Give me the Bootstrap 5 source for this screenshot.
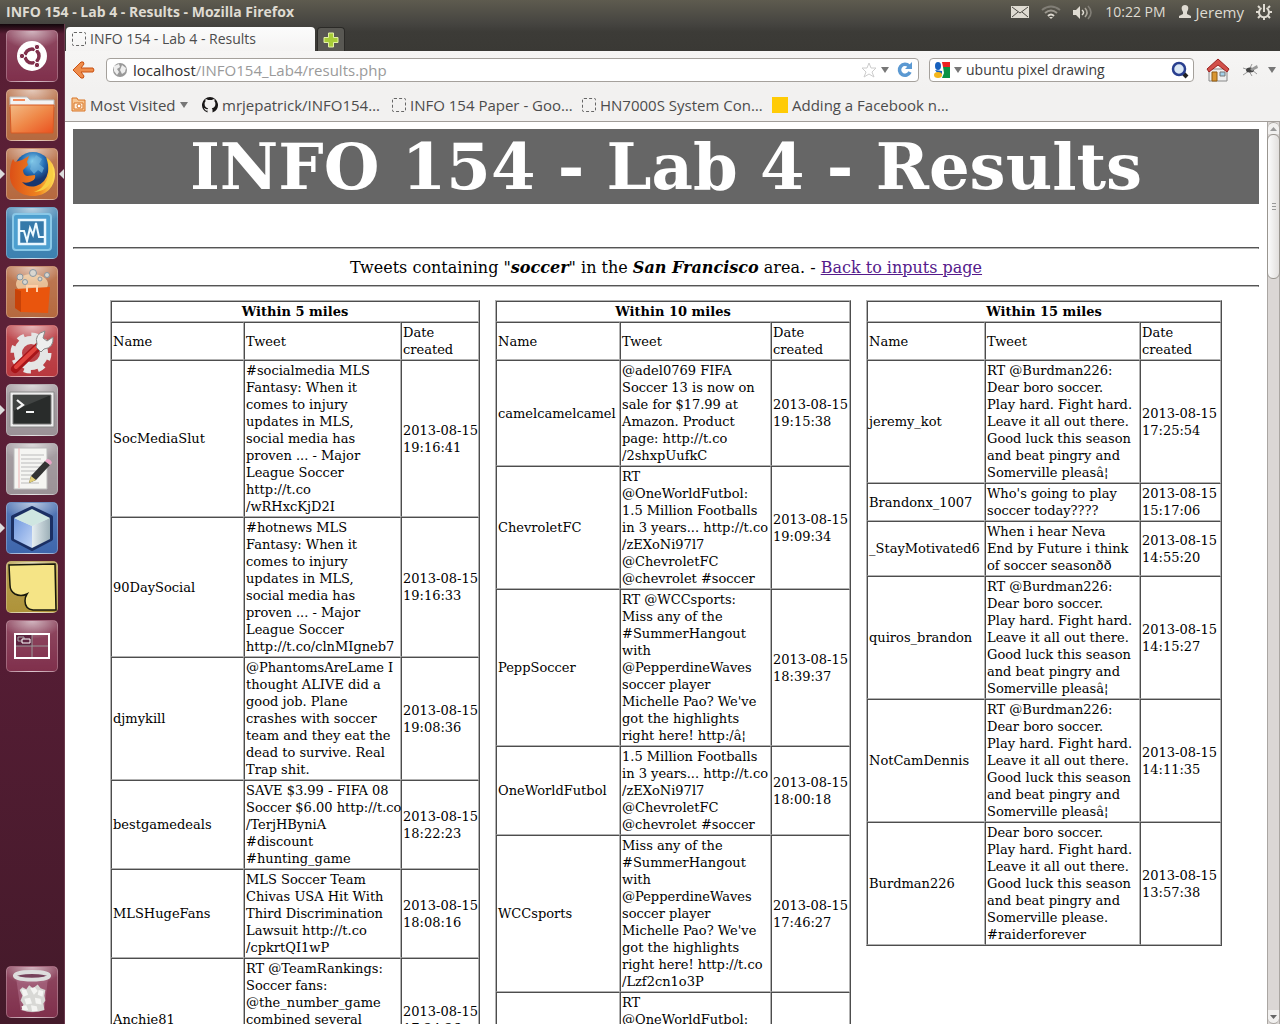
<!DOCTYPE html>
<html lang="en">
<head>
<meta charset="utf-8">
<meta name="viewport" content="width=device-width, initial-scale=1">
<title>INFO 154 - Lab 4 - Results</title>
<link href="https://cdn.jsdelivr.net/npm/bootstrap@5.3.0/dist/css/bootstrap.min.css" rel="stylesheet">
<style>
  body { font-family: "Open Sans", "Noto Sans", sans-serif; font-size: 14px; line-height: 20px; color: #4c4c4c; background: #3c3b37; }
  button { font: inherit; color: inherit; }
  svg { display: block; flex: none; }

  .top-panel { height: 24px; flex: none; background: linear-gradient(#5e5b4f, #454440); color: #dfdbd2; padding: 0 8px 0 6px; }
  .top-panel h1 { font-size: 14px; line-height: 24px; font-weight: 700; }
  .plain { border: 0; background: none; padding: 0; display: flex; align-items: center; }
  .user-name { font-size: 15px; }

  .launcher { width: 65px; flex: none; background: linear-gradient(#12060b 0, #581e34 10px, #5d2138 300px, #561d35 60%, #441a2a); padding: 6px 0 6px 6px; border-right: 1px solid #6b3a4d; }
  .tile-stack { gap: 7px; }
  .launcher-tile { position: relative; width: 52px; height: 52px; border-radius: 5px; border: 1px solid rgba(255,255,255,.25); display: flex; align-items: center; justify-content: center; padding: 0; background-image: radial-gradient(ellipse 30px 18px at 50% 0, rgba(255,255,255,.6), transparent), linear-gradient(rgba(255,255,255,.12), transparent); }
  .tile-wine { background-color: #80304c; }
  .tile-orange { background-color: #b5693f; }
  .tile-blue { background-color: #3c81b0; }
  .tile-red { background-color: #b8383e; }
  .tile-grey { background-color: #9b9297; }
  .tile-navy { background-color: #3e66ac; }
  .tile-olive { background-color: #ae9339; }
  .is-running::before, .is-focused::after { content: ""; position: absolute; top: 20px; border: 5px solid transparent; }
  .is-running::before { left: -7px; border-left-color: #ddd; border-right: 0; }
  .is-focused::after { right: -7px; border-right-color: #ddd; border-left: 0; }

  .tab-strip { height: 27px; flex: none; background: linear-gradient(#454440, #3c3b37 8px, #3a3935); padding: 3px 0 0 1px; }
  .page-tab { width: 249px; height: 24px; padding: 0 6px; border-radius: 4px 4px 0 0; background: linear-gradient(#fcfcfc, #f4f3f2); }
  .add-tab { width: 28px; height: 24px; margin-left: 2px; border-radius: 4px 4px 0 0; background: #595853; border: 1px solid #2b2a27; border-bottom: 0; justify-content: center; }
  .blank-icon { width: 14px; height: 14px; border: 1px dashed #666; border-radius: 2px; flex: none; }

  .nav-row { height: 38px; flex: none; background: linear-gradient(#f6f5f4, #f2f1f0); padding: 0 4px 0 7px; }
  .field-box { height: 24px; background: #fff; border: 1px solid #a5a19c; border-radius: 4px; padding: 0 5px; }
  .field-box input { border: 0; outline: 0; background: none; padding: 0; min-width: 0; color: #3c3c3c; width: 100%; height: 20px; }
  .url-field { margin-left: 10px; }
  .url-text { color: #9a9a9a; font-size: 15px; padding-left: 1px; }
  .url-text b { font-weight: 400; color: #303030; }
  .search-box { width: 265px; margin-left: 10px; }
  .triangle { width: 0; height: 0; border: 4px solid transparent; border-top: 6px solid #777; border-bottom: 0; flex: none; }

  .bookmark-row { height: 33px; flex: none; background: #f2f1f0; border-bottom: 1px solid #a19d99; padding: 0 0 1px 6px; font-size: 15px; }
  .bookmark-row a { color: #4c4c4c; text-decoration: none; display: flex; align-items: center; white-space: nowrap; flex: 0 0 190px; }
  .bookmark-row .most-visited { flex-basis: 131px; }
  .yellow-icon { width: 16px; height: 16px; background: #ffcb05; }

  .viewport { background: #fff; }
  .web-page { padding: 7px 8px 0; font-family: "DejaVu Serif", serif; color: #000; }
  .banner { background: #666; color: #fff; font-size: 64px; line-height: 75px; font-weight: 700; margin: 0 0 43px; }
  .rule { margin: 0; opacity: 1; border: 1px solid #555; border-bottom-color: #b5b5b5; height: 2px; }
  .summary { font-size: 16px; line-height: 20px; padding: 9px 0 7px; margin: 0; }
  .summary a { color: #551a8b; }
  .table-set { gap: 15px; padding-top: 13px; }
  .tweets { border-collapse: separate; border-spacing: 0; table-layout: fixed; border: 1px solid; border-color: #b2b2b2 #4d4d4d #4d4d4d #b2b2b2; font-size: 13px; line-height: 17px; flex: none; }
  .tweets td, .tweets th { border: 1px solid; border-color: #4d4d4d #b2b2b2 #b2b2b2 #4d4d4d; padding: 1px; white-space: nowrap; }
  .tweets th { font-weight: 400; }
  .tweets th[colspan] { text-align: center; font-weight: 700; }
  .set-a { width: 370px; } .set-b, .set-c { width: 356px; }
  .a1 { width: 133px; } .a2 { width: 157px; } .b1 { width: 124px; } .b2 { width: 151px; } .c1 { width: 118px; } .c2 { width: 155px; }

  .scroll-track { width: 13px; flex: none; background: #dbd7d5; border: 1px solid #aaa6a2; border-width: 0 1px; }
  .scroll-end { height: 12px; flex: none; background: #f1f0ef; justify-content: center; width: 100%; }
  .scroll-up { border-top: 1px solid #aaa6a2; border-radius: 6px 6px 0 0; }
  .scroll-down { height: 14px; border-bottom: 1px solid #aaa6a2; border-radius: 0 0 6px 6px; }
  .scroll-thumb { height: 145px; flex: none; margin: 0 -1px; border: 1px solid #99958f; border-radius: 6px; background: linear-gradient(90deg, #fbfbfb, #e2dfdd); }
  .grip { width: 4px; height: 8px; background: repeating-linear-gradient(#999 0 1px, transparent 1px 3px); }
</style>
<script src="https://cdn.jsdelivr.net/npm/bootstrap@5.3.0/dist/js/bootstrap.bundle.min.js"></script>
</head>
<body class="vh-100 overflow-hidden d-flex flex-column">
<header class="top-panel d-flex align-items-center justify-content-between">
  <h1 class="m-0">INFO 154 - Lab 4 - Results - Mozilla Firefox</h1>
  <div class="d-flex align-items-center">
    <button class="plain" aria-label="Messages"><svg width="18" height="12" viewBox="0 0 18 12"><path fill="#dfdbd2" d="M0 0h18v12H0z"/><path d="M1 1l8 6 8-6M1 11l6-5M17 11l-6-5" fill="none" stroke="#4b4943"/></svg></button>
    <button class="plain ms-2 ps-1" aria-label="Network"><svg width="20" height="15" viewBox="0 0 20 15" fill="none" stroke-width="2"><path d="M1 5Q10-2 19 5" stroke="#817e76"/><path d="M4 8q6-5 12 0" stroke="#9b978e"/><path d="M7 11q3-3 6 0" stroke="#dfdbd2"/><path d="M8 12h4l-2 2z" fill="#dfdbd2"/></svg></button>
    <button class="plain ms-2 ps-1" aria-label="Volume"><svg width="20" height="15" viewBox="0 0 20 15"><path fill="#dfdbd2" d="M0 5h3l4-4v13l-4-4H0z"/><g fill="none" stroke-width="1.6"><path stroke="#dfdbd2" d="M9 5q3 2.500 0 5"/><path stroke="#aaa69c" d="M12 3q4 4.500 0 9"/><path stroke="#817e76" d="M15 1q6 6.500 0 13"/></g></svg></button>
    <button class="plain ms-2 ps-1">10:22 PM</button>
    <button class="plain user-name ms-2 ps-1"><svg class="me-1" width="14" height="14" viewBox="0 0 14 14"><path fill="#dfdbd2" d="M7 0c4 0 4 4 2 7v2l4 2v2H1v-2l4-2V7C3 4 3 0 7 0z"/></svg>Jeremy</button>
    <button class="plain ms-2 ps-1" aria-label="System"><svg width="16" height="16" viewBox="0 0 16 16" fill="none" stroke="#dfdbd2"><path stroke-width="2" d="M5.500 4a5 5 0 1 0 5 0M8 0v8"/><path stroke-width="2" d="M0 8h3M13 8h3M2 2l2 2M14 2l-2 2M2 14l2-2M14 14l-2-2M8 13v3"/></svg></button>
  </div>
</header>

<div class="d-flex flex-grow-1 overflow-hidden">
  <nav class="launcher d-flex flex-column justify-content-between" aria-label="Launcher">
    <div class="tile-stack d-flex flex-column">
      <button class="launcher-tile tile-wine" aria-label="Dash home"><svg width="32" height="32" viewBox="0 0 32 32"><circle cx="16" cy="16" r="15" fill="#fff"/><circle cx="16" cy="16" r="7" fill="none" stroke="#80304c" stroke-width="3.500"/><path d="M16 16H4M16 16l6-10.500M16 16l6 10.500" stroke="#fff" stroke-width="1.500"/><g fill="#80304c" stroke="#fff"><circle cx="6" cy="16" r="2.700"/><circle cx="21" cy="7" r="2.700"/><circle cx="21" cy="25" r="2.700"/></g></svg></button>
      <button class="launcher-tile tile-orange" aria-label="Home folder"><svg width="46" height="40" viewBox="0 0 46 40"><defs><linearGradient id="fold" x2="1" y2="1"><stop stop-color="#f3bb86"/><stop offset=".5" stop-color="#ef8848"/><stop offset="1" stop-color="#ea501f"/></linearGradient></defs><path d="M1 12V2h17l3 3h24v7z" fill="#f3f3f3" stroke="#bbb"/><path d="M4 4h12v2H4z" fill="#f28b5d"/><path d="M1 10h44l-1 28H2z" fill="url(#fold)" stroke="#d65a25"/></svg></button>
      <button class="launcher-tile tile-orange is-running is-focused" aria-label="Firefox"><svg width="48" height="48" viewBox="0 0 48 48"><defs><radialGradient id="globe" cx=".5" cy=".25"><stop stop-color="#8cd4ef"/><stop offset=".6" stop-color="#246eb5"/><stop offset="1" stop-color="#17366f"/></radialGradient><linearGradient id="foxy" x2="1"><stop stop-color="#dc5017"/><stop offset=".65" stop-color="#ef8520"/><stop offset="1" stop-color="#ffdf55"/></linearGradient></defs><circle cx="25" cy="21" r="19" fill="url(#globe)"/><path d="M28 5l6 4-3 5 5 4-2 5-4-3-4 4-4-5 2-6z" fill="#76b9df" opacity=".65"/><path d="M5 9l2 3 7-2 7-4-2 6 1 3-5 5q0 5 4 6l8-1q1 4-3 6-5 3-10 1 5 6 14 4 10-3 12-14 1-7-2-15 9 6 9 17c0 13-9 22-22 22S1 37 2 24q0-9 3-15z" fill="url(#foxy)"/><path d="M39 8q4 12 0 22-4 9-13 12 15-1 19-15 0-12-6-19z" fill="#f8ce43"/></svg></button>
      <button class="launcher-tile tile-blue" aria-label="System monitor"><svg width="42" height="40" viewBox="0 0 42 40"><rect x="2" y="1" width="38" height="36" rx="3" fill="#4d9fcf" stroke="#8ac8e7" stroke-width="2"/><path d="M8 7h26v24H8z" fill="#3579aa" stroke="#e9f7ff" stroke-width="2.500"/><path d="M9 18h4l3 10 3-13 3 7 3-12 3 14h5" fill="none" stroke="#eefaff" stroke-width="2"/></svg></button>
      <button class="launcher-tile tile-orange" aria-label="Software centre"><svg width="44" height="46" viewBox="0 0 44 46"><ellipse cx="22" cy="15" rx="16" ry="10" fill="#ffe6bd" opacity=".65"/><g fill="#d9d6cf" stroke="#8796a1"><circle cx="10" cy="8" r="3"/><circle cx="23" cy="4" r="3.500"/><circle cx="30" cy="10" r="2"/><circle cx="37" cy="6" r="2.500"/><circle cx="15" cy="13" r="2.500"/></g><path d="M5 20l35-2-2 26-27-1-6-4z" fill="#e9550d"/><path d="M5 20l6 2v21l-6-4z" fill="#c84208"/><path d="M17 23v-6h10v6" fill="none" stroke="#ffd0a8" stroke-width="2"/></svg></button>
      <button class="launcher-tile tile-red" aria-label="System settings"><svg width="46" height="46" viewBox="0 0 46 46"><circle cx="22" cy="25" r="13" fill="none" stroke="#e5e5e5" stroke-width="8"/><circle cx="22" cy="25" r="18" fill="none" stroke="#e5e5e5" stroke-width="5" stroke-dasharray="7 7.100"/><path d="M6 41L31 17" stroke="#a81519" stroke-width="8" stroke-linecap="round"/><path d="M7 39L29 18" stroke="#e1443e" stroke-width="4" stroke-linecap="round"/><path d="M28 16q-3-10 8-13l-2 7 4 3 6-4q1 11-9 12l-3 3-5-5z" fill="#eee" stroke="#888"/></svg></button>
      <button class="launcher-tile tile-grey is-running" aria-label="Terminal"><svg width="46" height="38" viewBox="0 0 46 38"><path d="M1 1h44v35H1z" fill="#eee" stroke="#888"/><path d="M4 4h38v29H4z" fill="#292c2b" stroke="#777"/><path d="M4 4h38L4 20z" fill="#414443"/><path d="M8 9l6 5-6 4M17 21h8" fill="none" stroke="#f5f5f5" stroke-width="2.200"/></svg></button>
      <button class="launcher-tile tile-grey" aria-label="Text editor"><svg width="44" height="46" viewBox="0 0 44 46"><path d="M4 2h33v41H4z" fill="#f5f5f2" stroke="#bbb"/><path d="M9 2v40" stroke="#efb5b5"/><path d="M11 9h23M11 13h20M11 17h22M11 21h19M11 25h22M11 29h16M11 33h12M11 37h18" stroke="#bbb"/><path d="M19 37l2-7 14-15 5 4-14 15z" fill="#333"/><path d="M19 37l2-7 5 4z" fill="#e2cf78"/><path d="M35 15l2-2q4 0 5 4l-2 2z" fill="#eaa3c6"/></svg></button>
      <button class="launcher-tile tile-navy is-running" aria-label="NetBeans"><svg width="48" height="48" viewBox="0 0 48 48"><defs><linearGradient id="cubel" x2="1" y2="1"><stop stop-color="#6f97de"/><stop offset="1" stop-color="#c3d6f6"/></linearGradient><linearGradient id="cuber" x2="1"><stop stop-color="#e6eef1"/><stop offset="1" stop-color="#9db0b8"/></linearGradient></defs><path d="M24 4l19 9v22L24 45 5 35V13z" fill="#dce7ed" stroke="#1b2f63" stroke-width="4" stroke-linejoin="round"/><path d="M6 14l18 8v22L6 35z" fill="url(#cubel)"/><path d="M24 22l18-8v21l-18 9z" fill="url(#cuber)"/><path d="M6 14L24 5l18 9-18 8z" fill="#cfe6e1"/></svg></button>
      <button class="launcher-tile tile-olive" aria-label="Sticky notes"><svg width="50" height="50" viewBox="0 0 50 50"><path d="M2 3l46-1 1 46H26q-8-1-8-9 0-4 2-7-6 3-12 0-5-3-5-9z" fill="#f5e486" stroke="#17170c" stroke-width="1.500"/></svg></button>
      <button class="launcher-tile tile-wine" aria-label="Workspaces"><svg width="38" height="28" viewBox="0 0 38 28"><path d="M2 2h17v12H2z" fill="#5e2440"/><path d="M19 2v24M2 14h34" stroke="#999"/><path d="M2 2h34v24H2z" fill="none" stroke="#fff" stroke-width="2"/><path d="M5 5h6v4H5z" fill="none" stroke="#aaa"/><path d="M9 7h8v4H9z" fill="#5e2440" stroke="#fff"/></svg></button>
    </div>
    <button class="launcher-tile tile-wine" aria-label="Trash"><svg width="40" height="46" viewBox="0 0 42 48"><path d="M4 7h34l-4 36q-13 5-25 0z" fill="#b57891" opacity=".5"/><path d="M8 22l3-3 4 2 3-4 4 3 5-4 3 4 5 2-1 6 1 5-2 3 1 7q-12 4-24 0l2-6-3-4 2-5z" fill="#d8d8d5"/><g fill="#f4f4f2"><path d="M10 21l5 1 2 5-5 2zM19 20l5-1 3 4-4 4zM28 22l5 1-1 6-5-2zM13 31l6-1 2 6-6 1zM24 30l6 1 1 6-6-1zM10 39l5-1 2 5-6 0zM20 38l6 1 1 5-6 0z"/></g><ellipse cx="21" cy="7" rx="18" ry="4" fill="#76405a" stroke="#ddd" stroke-width="4"/></svg></button>
  </nav>

  <div class="d-flex flex-column flex-grow-1 overflow-hidden">
    <div class="tab-strip d-flex">
      <button class="plain page-tab"><span class="blank-icon me-1"></span>INFO 154 - Lab 4 - Results</button>
      <button class="plain add-tab" aria-label="New tab"><svg width="16" height="16" viewBox="0 0 16 16"><path d="M5.500 1h5v4.500H15v5h-4.500V15h-5v-4.500H1v-5h4.500z" fill="#a7cc38" stroke="#e4f2a4"/></svg></button>
    </div>
    <div class="nav-row d-flex align-items-center">
      <button class="plain" aria-label="Back"><svg width="24" height="20" viewBox="0 0 24 20"><path d="M1 10l8-8q3-1 3 2l-3 4h12q2 2 0 4H9l3 4q0 3-3 2z" fill="#ee8d4c" stroke="#c95113"/></svg></button>
      <div class="field-box url-field d-flex align-items-center flex-grow-1">
        <svg class="me-1" width="16" height="16" viewBox="0 0 16 16"><circle cx="8" cy="8" r="7" fill="#999"/><path d="M2 4l5-2 1 3-3 2 2 3-2 3-3-4zM10 3l4 3-1 4-3 2-2-4z" fill="#eee"/></svg>
        <a class="url-text flex-grow-1 text-decoration-none" href="#"><b>localhost</b>/INFO154_Lab4/results.php</a>
        <svg width="16" height="16" viewBox="0 0 16 16"><path d="M8 1l2 5h5l-4 4 2 5-5-3-5 3 2-5-4-4h5z" fill="#fff" stroke="#ccc"/></svg>
        <span class="triangle mx-1"></span>
        <svg class="ms-1" width="16" height="16" viewBox="0 0 16 16"><path d="M13 10a5.500 5.500 0 1 1-1-6" fill="none" stroke="#5b99d2" stroke-width="3.500"/><path d="M8 7h7V0z" fill="#5b99d2"/></svg>
      </div>
      <div class="field-box search-box d-flex align-items-center ps-1 pe-0">
        <svg width="16" height="16" viewBox="0 0 16 16"><path d="M8 0h8v5H9z" fill="#e22"/><path d="M9 5h7v11H8l2-5z" fill="#099344"/><ellipse cx="4" cy="4" rx="3" ry="4" fill="#1760bd"/><path d="M1 8l7 1v3H4z" fill="#1760bd"/><ellipse cx="4" cy="13" rx="4" ry="3" fill="#f4b61b"/></svg>
        <span class="triangle mx-1"></span>
        <input type="text" aria-label="Search" value="ubuntu pixel drawing">
        <svg class="me-1" width="18" height="18" viewBox="0 0 18 18"><path d="M12 12l4 4" stroke="#222" stroke-width="4"/><circle cx="8" cy="8" r="6" fill="#dbe8f5" stroke="#293f8f" stroke-width="2.500"/></svg>
      </div>
      <button class="plain ms-2 ps-1" aria-label="Home"><svg width="24" height="24" viewBox="0 0 24 24"><path d="M3 11h18v12H3z" fill="#eee" stroke="#888"/><path d="M6 14h5v9H6z" fill="#d99632" stroke="#925c12"/><path d="M14 14h5v4h-5z" fill="#a5d1ea" stroke="#777"/><path d="M12 1l11 10-2 3-9-7-9 7-2-3z" fill="#d2504a" stroke="#9b2322"/></svg></button>
      <button class="plain ms-2 ps-1" aria-label="Firebug"><svg width="18" height="14" viewBox="0 0 18 14"><path d="M1 5l6 2 3-6M1 12l6-4 3 5M10 7l5 4" stroke="#999" fill="none"/><ellipse cx="8" cy="7" rx="4" ry="2.500" fill="#444"/><path d="M8 6l7-4 1 3-6 3z" fill="#999"/></svg></button>
      <span class="triangle ms-2"></span>
    </div>
    <nav class="bookmark-row d-flex align-items-center" aria-label="Bookmarks">
      <a href="#" class="most-visited"><svg width="15" height="15" viewBox="0 0 15 15"><path d="M1 14V1h5l1 2h7v11z" fill="#f7c692" stroke="#d87426"/><path d="M3 6h9v6H3z" fill="#fff0dd" stroke="#d87426"/><circle cx="8" cy="9" r="2" fill="#fff" stroke="#d87426"/></svg><span class="ms-1">Most Visited</span><span class="triangle ms-1"></span></a>
      <a href="#"><svg width="16" height="16" viewBox="0 0 16 16"><path fill="#191717" d="M8 0a8 8 0 0 0-2.500 15.600v-2c-2 .4-2.600-1-2.900-1.600-.6-1-1-.9-.3-1 1-.1 1.200 1.700 3.300 1.200.1-.6.400-.9.600-1C2 10.600 2 5.500 3.600 4.200c-.4-1.200 0-2 .1-2.200 1-.1 2 .8 2.300 1h4c.3-.2 1.300-1.100 2.300-1 .1.200.5 1 .1 2.200 1.600 1.300 1.600 6.400-2.600 7 .5.500.7 1 .7 2v2.400A8 8 0 0 0 8 0z"/></svg><span class="ms-1">mrjepatrick/INFO154…</span></a>
      <a href="#"><span class="blank-icon me-1"></span>INFO 154 Paper - Goo…</a>
      <a href="#"><span class="blank-icon me-1"></span>HN7000S System Con…</a>
      <a href="#"><span class="yellow-icon me-1"></span>Adding a Facebook n…</a>
    </nav>

    <div class="viewport d-flex flex-grow-1 overflow-hidden">
      <main class="web-page flex-grow-1 overflow-hidden">
        <h2 class="banner text-center">INFO 154 - Lab 4 - Results</h2>
        <hr class="rule">
        <p class="summary text-center">Tweets containing "<b><i>soccer</i></b>" in the <b><i>San Francisco</i></b> area. - <a href="#">Back to inputs page</a></p>
        <hr class="rule">
        <div class="table-set d-flex justify-content-center align-items-start">
          <table class="tweets set-a">
            <colgroup><col class="a1"><col class="a2"><col></colgroup>
            <thead><tr><th colspan="3">Within 5 miles</th></tr>
            <tr><th>Name</th><th>Tweet</th><th>Date<br>created</th></tr></thead>
            <tbody>
            <tr><td>SocMediaSlut</td><td>#socialmedia MLS<br>Fantasy: When it<br>comes to injury<br>updates in MLS,<br>social media has<br>proven ... - Major<br>League Soccer<br>http://t.co<br>/wRHxcKjD2I</td><td>2013-08-15<br>19:16:41</td></tr>
            <tr><td>90DaySocial</td><td>#hotnews MLS<br>Fantasy: When it<br>comes to injury<br>updates in MLS,<br>social media has<br>proven ... - Major<br>League Soccer<br>http://t.co/clnMIgneb7</td><td>2013-08-15<br>19:16:33</td></tr>
            <tr><td>djmykill</td><td>@PhantomsAreLame I<br>thought ALIVE did a<br>good job. Plane<br>crashes with soccer<br>team and they eat the<br>dead to survive. Real<br>Trap shit.</td><td>2013-08-15<br>19:08:36</td></tr>
            <tr><td>bestgamedeals</td><td>SAVE $3.99 - FIFA 08<br>Soccer $6.00 http://t.co<br>/TerjHByniA<br>#discount<br>#hunting_game</td><td>2013-08-15<br>18:22:23</td></tr>
            <tr><td>MLSHugeFans</td><td>MLS Soccer Team<br>Chivas USA Hit With<br>Third Discrimination<br>Lawsuit http://t.co<br>/cpkrtQI1wP</td><td>2013-08-15<br>18:08:16</td></tr>
            <tr><td>Anchie81</td><td>RT @TeamRankings:<br>Soccer fans:<br>@the_number_game<br>combined several<br><br><br>&nbsp;</td><td>2013-08-15<br>17:24:26</td></tr>
            </tbody>
          </table>
          <table class="tweets set-b">
            <colgroup><col class="b1"><col class="b2"><col></colgroup>
            <thead><tr><th colspan="3">Within 10 miles</th></tr>
            <tr><th>Name</th><th>Tweet</th><th>Date<br>created</th></tr></thead>
            <tbody>
            <tr><td>camelcamelcamel</td><td>@adel0769 FIFA<br>Soccer 13 is now on<br>sale for $17.99 at<br>Amazon. Product<br>page: http://t.co<br>/2shxpUufkC</td><td>2013-08-15<br>19:15:38</td></tr>
            <tr><td>ChevroletFC</td><td>RT<br>@OneWorldFutbol:<br>1.5 Million Footballs<br>in 3 years... http://t.co<br>/zEXoNi97l7<br>@ChevroletFC<br>@chevrolet #soccer</td><td>2013-08-15<br>19:09:34</td></tr>
            <tr><td>PeppSoccer</td><td>RT @WCCsports:<br>Miss any of the<br>#SummerHangout<br>with<br>@PepperdineWaves<br>soccer player<br>Michelle Pao? We've<br>got the highlights<br>right here! http:/â¦</td><td>2013-08-15<br>18:39:37</td></tr>
            <tr><td>OneWorldFutbol</td><td>1.5 Million Footballs<br>in 3 years... http://t.co<br>/zEXoNi97l7<br>@ChevroletFC<br>@chevrolet #soccer</td><td>2013-08-15<br>18:00:18</td></tr>
            <tr><td>WCCsports</td><td>Miss any of the<br>#SummerHangout<br>with<br>@PepperdineWaves<br>soccer player<br>Michelle Pao? We've<br>got the highlights<br>right here! http://t.co<br>/Lzf2cn1o3P</td><td>2013-08-15<br>17:46:27</td></tr>
            <tr><td>&nbsp;</td><td>RT<br>@OneWorldFutbol:<br>&nbsp;</td><td>&nbsp;</td></tr>
            </tbody>
          </table>
          <table class="tweets set-c">
            <colgroup><col class="c1"><col class="c2"><col></colgroup>
            <thead><tr><th colspan="3">Within 15 miles</th></tr>
            <tr><th>Name</th><th>Tweet</th><th>Date<br>created</th></tr></thead>
            <tbody>
            <tr><td>jeremy_kot</td><td>RT @Burdman226:<br>Dear boro soccer.<br>Play hard. Fight hard.<br>Leave it all out there.<br>Good luck this season<br>and beat pingry and<br>Somerville pleasâ¦</td><td>2013-08-15<br>17:25:54</td></tr>
            <tr><td>Brandonx_1007</td><td>Who's going to play<br>soccer today????</td><td>2013-08-15<br>15:17:06</td></tr>
            <tr><td>_StayMotivated6</td><td>When i hear Neva<br>End by Future i think<br>of soccer seasonðð</td><td>2013-08-15<br>14:55:20</td></tr>
            <tr><td>quiros_brandon</td><td>RT @Burdman226:<br>Dear boro soccer.<br>Play hard. Fight hard.<br>Leave it all out there.<br>Good luck this season<br>and beat pingry and<br>Somerville pleasâ¦</td><td>2013-08-15<br>14:15:27</td></tr>
            <tr><td>NotCamDennis</td><td>RT @Burdman226:<br>Dear boro soccer.<br>Play hard. Fight hard.<br>Leave it all out there.<br>Good luck this season<br>and beat pingry and<br>Somerville pleasâ¦</td><td>2013-08-15<br>14:11:35</td></tr>
            <tr><td>Burdman226</td><td>Dear boro soccer.<br>Play hard. Fight hard.<br>Leave it all out there.<br>Good luck this season<br>and beat pingry and<br>Somerville please.<br>#raiderforever</td><td>2013-08-15<br>13:57:38</td></tr>
            </tbody>
          </table>
        </div>
      </main>
      <div class="scroll-track d-flex flex-column">
        <button class="plain scroll-end scroll-up" aria-label="Scroll up"><svg width="7" height="4" viewBox="0 0 7 4"><path d="M0 4h7L3.500 0z" fill="#999"/></svg></button>
        <div class="scroll-thumb d-flex align-items-center justify-content-center"><span class="grip"></span></div>
        <button class="plain scroll-end scroll-down mt-auto" aria-label="Scroll down"><svg width="7" height="4" viewBox="0 0 7 4"><path d="M0 0h7L3.500 4z" fill="#666"/></svg></button>
      </div>
    </div>
  </div>
</div>
</body>
</html>
